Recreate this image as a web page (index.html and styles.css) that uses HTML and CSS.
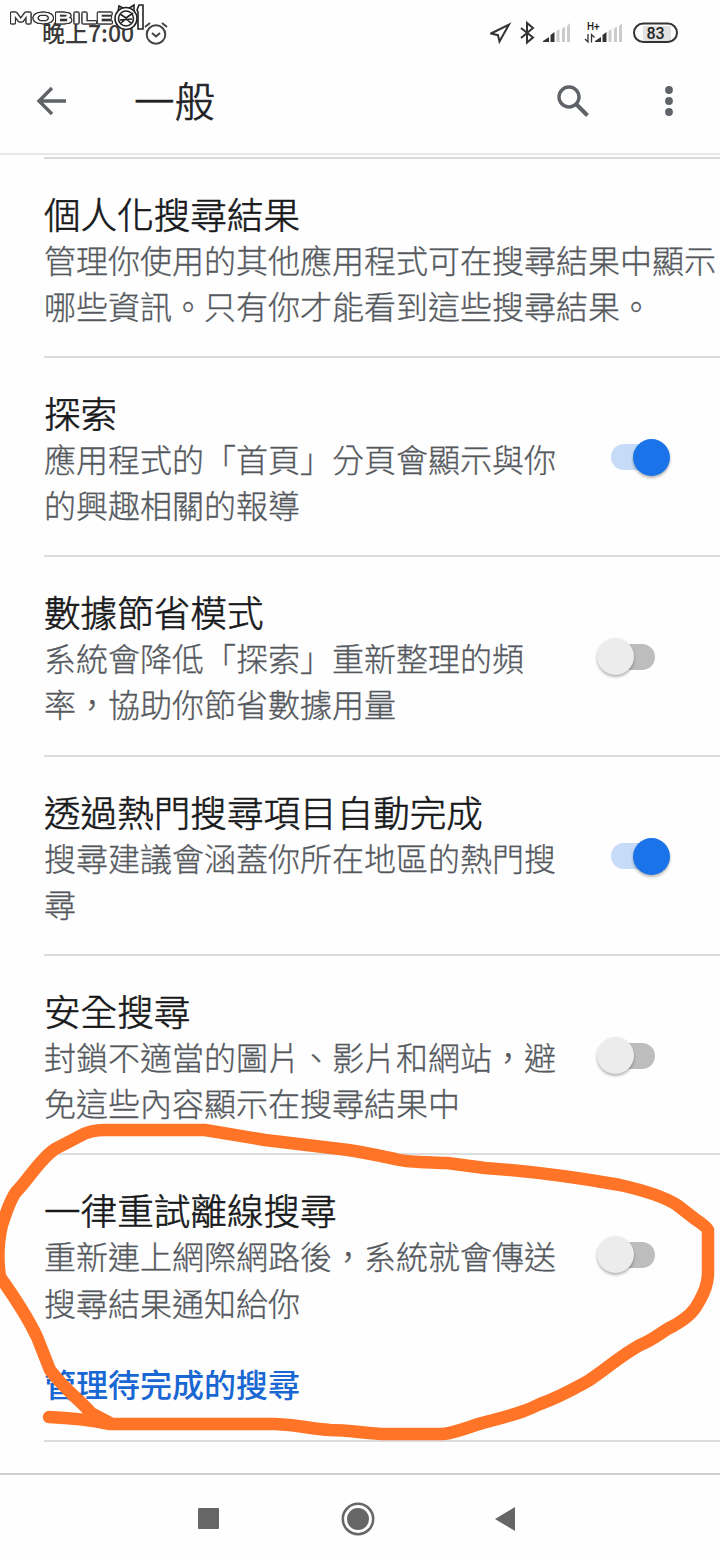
FILE: index.html
```html
<!DOCTYPE html>
<html lang="zh-Hant">
<head>
<meta charset="utf-8">
<title>一般</title>
<link rel="stylesheet" href="styles.css">
</head>
<body>
<div class="phone">
  <header class="status">
    <span class="clock">晚上7:00</span>
    <svg class="alarm" width="24" height="24" viewBox="0 0 24 24"><circle cx="12" cy="13.5" r="9.3"/><path d="M8 12l4 3.500 4-3.500M1 6l5-4M18 2l5 4"/></svg>
    <span class="spacer"></span>
    <svg class="signals" width="190" height="28" viewBox="0 0 190 28">
      <g class="line"><path d="M1 14.500L19 5.500 9.500 22.500 8 16.200Z"/><path d="M31 9l12 9.500-6 5V4l6 5-12 10"/></g>
      <g id="bars"><path class="dark" d="M53 23v-1l6-4v5zM60.500 23v-7l4-3v10z"/><path class="pale" d="M66.500 23V12l3-2v13zM72 23V9.500l3-2V23zM77 23V7l3-3v19z"/></g>
      <use href="#bars" x="52"/>
      <text class="hplus" x="97" y="10.500">H+</text>
      <path class="thin" d="M98 15v8l-3-3M101.500 23.500v-8l3 3"/>
      <rect class="level" x="153" y="7" width="28" height="15"/>
      <rect class="line" x="144" y="4.500" width="43" height="18.500" rx="9.200"/>
      <text class="percent" x="165.500" y="19.500">83</text>
    </svg>
  </header>
  <div class="appbar">
    <svg width="32" height="32" viewBox="0 0 32 32" class="tool"><path d="M30 16H3M16 3L3 16l13 13"/></svg>
    <h1>一般</h1>
    <svg width="34" height="34" viewBox="0 0 34 34" class="tool search"><circle cx="13" cy="13" r="10"/><path d="M20.500 20.500l11 11" class="handle"/></svg>
    <svg width="10" height="32" viewBox="0 0 10 32" class="more"><circle cx="5" cy="5" r="3.900"/><circle cx="5" cy="16" r="3.900"/><circle cx="5" cy="27" r="3.900"/></svg>
  </div>
  <main class="list">
    <section class="row"><div class="copy wide"><h2>個人化搜尋結果</h2><p>管理你使用的其他應用程式可在搜尋結果中顯示<br>哪些資訊。只有你才能看到這些搜尋結果。</p></div></section>
    <section class="row"><div class="copy"><h2>探索</h2><p>應用程式的「首頁」分頁會顯示與你<br>的興趣相關的報導</p></div><span class="switch on"></span></section>
    <section class="row"><div class="copy"><h2>數據節省模式</h2><p>系統會降低「探索」重新整理的頻<br>率，協助你節省數據用量</p></div><span class="switch"></span></section>
    <section class="row"><div class="copy"><h2>透過熱門搜尋項目自動完成</h2><p>搜尋建議會涵蓋你所在地區的熱門搜<br>尋</p></div><span class="switch on"></span></section>
    <section class="row"><div class="copy"><h2>安全搜尋</h2><p>封鎖不適當的圖片、影片和網站，避<br>免這些內容顯示在搜尋結果中</p></div><span class="switch"></span></section>
    <section class="row last"><div class="copy"><h2>一律重試離線搜尋</h2><p>重新連上網際網路後，系統就會傳送<br>搜尋結果通知給你</p><a class="manage">管理待完成的搜尋</a></div><span class="switch"></span></section>
  </main>
  <nav class="nav">
    <svg width="720" height="84" viewBox="0 0 720 84"><rect x="198" y="33" width="21" height="21" rx="1"/><circle cx="358" cy="44" r="11"/><circle class="ring" cx="358" cy="44" r="15.200"/><path d="M495 44l20-12v24z"/></svg>
  </nav>
  <svg class="watermark" width="150" height="34" viewBox="0 0 150 34">
    <text x="9" y="23" textLength="104" lengthAdjust="spacingAndGlyphs">MOBILE</text>
    <g class="face"><path d="M137 10l2-5h4v24h-5V12z"/><path d="M118 12l1-6 6 3M128 9l6-4v7"/><circle cx="126" cy="18.500" r="11"/><circle cx="126" cy="18.500" r="7.500"/><path d="M120 14l6 4 7-5M120 20l12-1M121 23l5-4 5 4"/></g>
  </svg>
  <svg class="scribble" width="720" height="1560" viewBox="0 0 720 1560"><path d="M49 1417C75 1418 95 1421 110 1424H275C300 1425 310 1429 330 1430C350 1430 370 1434 385 1434H443C460 1432 475 1424 490 1421C520 1413 528 1410 540 1404C560 1397 575 1388 588 1381C605 1370 620 1356 640 1345C655 1339 662 1331 675 1325C690 1316 695 1310 700 1300Q707 1288 708 1275V1230Q707 1227 695 1219L677 1205Q660 1194 620 1185C580 1178 530 1171 485 1168L447 1163C430 1162 410 1163 395 1159C375 1155 360 1151 340 1149L265 1140L205 1130H105Q90 1130 80 1136L55 1149C40 1159 28 1180 16 1192Q10 1200 2 1225Q-4 1250 0 1277Q25 1312 37 1337L50 1370C65 1390 80 1400 91 1413L112 1424"/></svg>
</div>
</body>
</html>
```
FILE: styles.css
```css
body { margin: 0; background: #fefefe; font-family: "Noto Sans CJK TC", sans-serif; }
.phone { position: relative; display: flex; flex-direction: column; width: 720px; height: 1560px; overflow: hidden; }
.status { display: flex; align-items: center; height: 52px; padding: 14px 40px 0 42px; box-sizing: border-box; }
.clock { margin-top: -2px; font-size: 23px; font-weight: 500; line-height: 36px; color: #3a3a3a; }
.alarm { margin-left: 10px; fill: none; stroke: #444; stroke-width: 2; }
.spacer { flex: 1; }
.line { fill: none; stroke: #333; stroke-width: 2; }
.thin { fill: none; stroke: #333; stroke-width: 1.3; }
.dark { fill: #333; }
.pale { fill: #ccc; }
.level { fill: #e2e2e2; }
.hplus { font: 500 10px Roboto, sans-serif; fill: #222; }
.percent { font: 500 16px Roboto, sans-serif; fill: #222; text-anchor: middle; }
.appbar { display: flex; align-items: center; height: 103px; padding: 0 46px 3px 36px; border-bottom: 2px solid #e8e8e8; box-sizing: border-box; }
.tool { fill: none; stroke: #5f6368; stroke-width: 3.4; }
.handle { stroke-width: 4; }
h1 { flex: 1; margin: -3px 0 0 66px; font-size: 40.500px; font-weight: 300; line-height: 60px; color: #202124; -webkit-text-stroke: 0.7px #202124; }
.search { margin-right: 74px; }
.more { fill: #5f6368; }
.list { margin-left: 44px; padding-top: 1.500px; flex: 1; }
.list::before { content: ""; display: block; height: 2px; background: #d9dadc; }
.row { display: flex; height: 199.4px; padding-top: 33px; box-sizing: border-box; border-bottom: 2px solid #dcdde0; }
.copy { width: 520px; flex: none; white-space: nowrap; }
h2 { margin: 0; font-size: 36.600px; font-weight: 300; line-height: 44px; color: #18191b; -webkit-text-stroke: 0.6px #18191b; }
p { margin: 0; font-size: 32px; font-weight: 300; line-height: 46.200px; color: #55595e; -webkit-text-stroke: 0.3px #55595e; }
.switch { position: relative; width: 44px; height: 26px; margin: 53.500px 0 0 47px; border-radius: 13px; background: #bdbdbd; }
.switch::after { content: ""; position: absolute; left: -14px; top: -5.500px; width: 37px; height: 37px; border-radius: 50%; background: #ececec; box-shadow: 0 2px 3px rgba(0,0,0,.3); }
.switch.on { background: #c5dbf8; }
.switch.on::after { left: 22px; background: #1a73e8; }
.last { height: 286.500px; }
.manage { display: block; margin-top: 35px; font-size: 32px; line-height: 46px; font-weight: 500; color: #1967d2; }
.nav { height: 85px; border-top: 2px solid #cecece; }
.nav svg { display: block; fill: #666; }
.ring { fill: none; stroke: #666; stroke-width: 2.500; }
.watermark { position: absolute; left: 0; top: 0; }
.watermark text { font: 14px "DejaVu Sans", sans-serif; fill: #fff; stroke: #fff; stroke-width: 0.5; filter: drop-shadow(1px 0 0 #333) drop-shadow(-1px 0 0 #333) drop-shadow(0 1px 0 #333) drop-shadow(0 -1px 0 #333); }
.face { fill: #fff; stroke: #222; stroke-width: 1.600; }
.scribble { position: absolute; left: 0; top: 0; fill: none; stroke: #ff7426; stroke-width: 12.500; stroke-linecap: round; stroke-linejoin: round; pointer-events: none; }
```
